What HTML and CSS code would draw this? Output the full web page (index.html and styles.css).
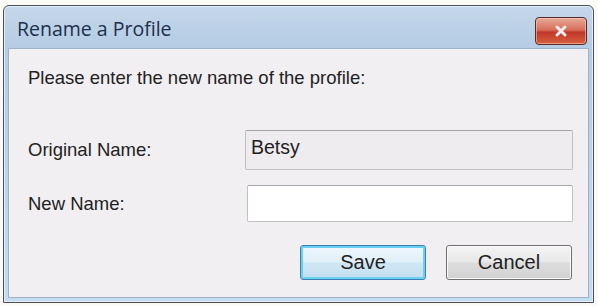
FILE: index.html
```html
<!DOCTYPE html>
<html>
<head>
<meta charset="utf-8">
<link rel="stylesheet" href="styles.css">
</head>
<body>
<div class="window">
  <div class="titlebar">
    <span class="title">Rename a Profile</span>
    <div class="close">
      <svg width="22" height="14" viewBox="0 0 22 14"><path d="M7 3 L15 11 M15 3 L7 11" stroke="#fbeeee" stroke-width="3" stroke-linecap="round"/></svg>
    </div>
  </div>
  <div class="client">
    <p class="prompt">Please enter the new name of the profile:</p>
    <div class="row row-orig">
      <span class="label">Original Name:</span>
      <div class="field field-ro">Betsy</div>
    </div>
    <div class="row row-new">
      <span class="label">New Name:</span>
      <div class="field field-edit"></div>
    </div>
    <div class="buttons">
      <div class="btn btn-default">Save</div>
      <div class="btn">Cancel</div>
    </div>
  </div>
</div>
</body>
</html>
```
FILE: styles.css
```css
html, body {
  margin: 0;
  padding: 0;
  background: #fbfaf6;
  width: 598px;
  height: 306px;
  overflow: hidden;
}
body {
  padding: 5px 4px 3px 3px;
  box-sizing: border-box;
  font-family: "Liberation Sans", Arial, sans-serif;
}
.window {
  height: 298px;
  border: 1px solid #4a4f58;
  border-radius: 6px 6px 0 0;
  background: linear-gradient(#c6d8ea, #b4cce4 40px, #c4dcf0);
  padding: 0 4px 4px 4px;
  display: flex;
  flex-direction: column;
  box-sizing: border-box;
  box-shadow: inset 0 0 0 1px #e4eef8;
}
.titlebar {
  height: 42px;
  display: flex;
  align-items: center;
  justify-content: space-between;
  padding: 0 2px 0 9px;
  flex: none;
}
.title {
  font-family: "Open Sans", "DejaVu Sans", sans-serif;
  font-size: 19.5px;
  color: #1e2f4c;
  letter-spacing: 0;
  margin-top: 2px;
}
.close {
  width: 50px;
  height: 26px;
  margin-top: 8px;
  border: 1px solid #5a2a26;
  border-radius: 4px;
  background: linear-gradient(#e8a898 0%, #d8705c 45%, #c0382a 55%, #d8603e 100%);
  display: flex;
  align-items: center;
  justify-content: center;
  box-shadow: inset 0 0 0 1px rgba(255,220,210,0.5);
}
.client {
  flex: 1;
  background: #f1eff1;
  border: 1px solid #9fb2c6;
  display: flex;
  flex-direction: column;
  padding: 0 0 0 19px;
}
.prompt {
  margin: 18px 0 0 0;
  font-size: 18.5px;
  color: #222;
}
.row {
  display: flex;
  align-items: center;
}
.row-orig { margin-top: 41px; }
.row-new { margin-top: 15px; }
.label {
  width: 217px;
  font-size: 18.5px;
  color: #222;
}
.field {
  width: 328px;
  box-sizing: border-box;
  border: 1px solid #c0c0c4;
  border-top-color: #a6a6aa;
  border-radius: 2px;
  font-size: 19.5px;
  color: #222;
  padding: 0 5px;
}
.field-ro {
  height: 40px;
  background: #eeecee;
  padding-top: 5px;
}
.field-edit {
  height: 37px;
  background: #fff;
  margin-left: 2px;
  width: 326px;
}
.buttons {
  display: flex;
  justify-content: flex-end;
  gap: 20px;
  margin-top: 23px;
  padding-right: 16px;
}
.btn {
  width: 126px;
  height: 35px;
  box-sizing: border-box;
  border: 1px solid #707070;
  border-radius: 3px;
  background: linear-gradient(#f4f4f4 0%, #e8e8e8 48%, #dcdcdc 52%, #d2d2d2 100%);
  display: flex;
  align-items: center;
  justify-content: center;
  font-size: 20px;
  color: #222;
  box-shadow: inset 0 0 0 1px #fafafa;
}
.btn-default {
  border-color: #3c7fb1;
  box-shadow: inset 0 0 0 2px #6ad0f2;
  background: linear-gradient(#eef7fc 0%, #e0eff8 48%, #cfe6f4 52%, #c4e0f0 100%);
}
```
